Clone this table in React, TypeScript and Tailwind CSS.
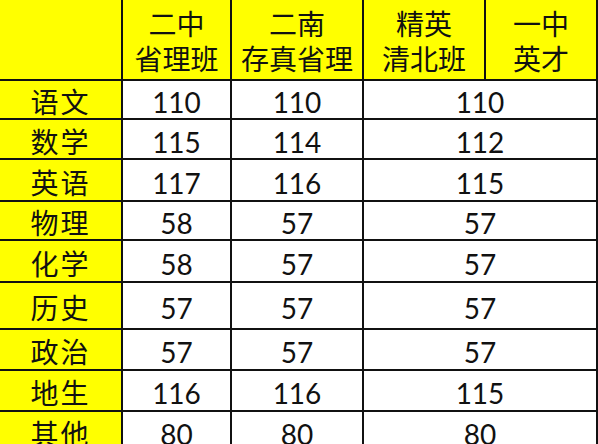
import React from 'react';

type Row = { subject: string; a: string; b: string; c: string; h: string };

const ROWS: Row[] = [
  { subject: '语文', a: '110', b: '110', c: '110', h: 'h-[39px]' },
  { subject: '数学', a: '115', b: '114', c: '112', h: 'h-[40px]' },
  { subject: '英语', a: '117', b: '116', c: '115', h: 'h-[42px]' },
  { subject: '物理', a: '58', b: '57', c: '57', h: 'h-[39px]' },
  { subject: '化学', a: '58', b: '57', c: '57', h: 'h-[42px]' },
  { subject: '历史', a: '57', b: '57', c: '57', h: 'h-[47px]' },
  { subject: '政治', a: '57', b: '57', c: '57', h: 'h-[41px]' },
  { subject: '地生', a: '116', b: '116', c: '115', h: 'h-[41px]' },
  { subject: '其他', a: '80', b: '80', c: '80', h: 'h-[41px]' },
];

const HEADERS = [
  ['二中', '省理班'],
  ['二南', '存真省理'],
  ['精英', '清北班'],
  ['一中', '英才'],
];

const cell = 'flex items-center justify-center border-r-2 border-b-2 border-[#111] pt-[5px]';

export default function ScoreTable() {
  return (
    <div
      className="w-[598px] h-[444px] overflow-hidden bg-white text-[28px] leading-none text-[#111]"
      style={{ fontFamily: 'Lato, "Noto Sans CJK SC", sans-serif' }}
    >
      <div className="grid grid-cols-[123px_109px_132px_122px_112px]">
        <div className={`${cell} h-[81px] bg-[#ffff00]`} />
        {HEADERS.map(([l1, l2]) => (
          <div key={l1} className={`${cell} h-[81px] bg-[#ffff00] flex-col leading-[35px]`}>
            <span>{l1}</span>
            <span>{l2}</span>
          </div>
        ))}

        {ROWS.map((r) => (
          <React.Fragment key={r.subject}>
            <div className={`${cell} ${r.h} bg-[#ffff00] tracking-[2px]`}>{r.subject}</div>
            <div className={`${cell} ${r.h}`}>{r.a}</div>
            <div className={`${cell} ${r.h}`}>{r.b}</div>
            <div className={`${cell} ${r.h} col-span-2`}>{r.c}</div>
          </React.Fragment>
        ))}
      </div>
    </div>
  );
}
